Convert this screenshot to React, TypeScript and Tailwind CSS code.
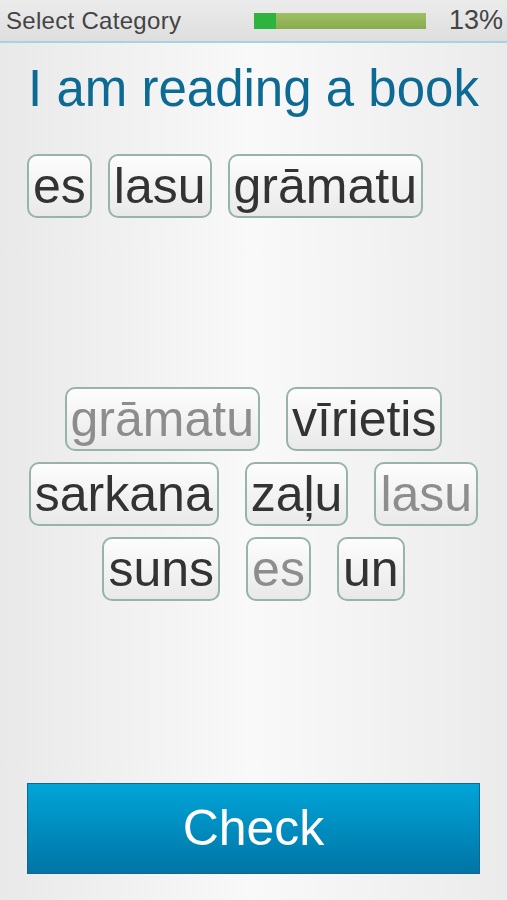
const answer = ['es', 'lasu', 'grāmatu']

const bank: { word: string; used?: boolean }[][] = [
  [{ word: 'grāmatu', used: true }, { word: 'vīrietis' }],
  [{ word: 'sarkana' }, { word: 'zaļu' }, { word: 'lasu', used: true }],
  [{ word: 'suns' }, { word: 'es', used: true }, { word: 'un' }],
]

function Chip({ word, used }: { word: string; used?: boolean }) {
  return (
    <div
      className={`h-[64px] px-[4px] border-2 border-[#98b3ab] rounded-[10px] bg-gradient-to-b from-[#fdfdfd] to-[#e9e9e9] text-[50px] leading-[60px] ${
        used ? 'text-[#8d8d8d]' : 'text-[#333333]'
      }`}
    >
      {word}
    </div>
  )
}

export default function App() {
  return (
    <div className="w-[507px] h-[900px] flex flex-col bg-gradient-to-r from-[#e9e9e9] via-[#f9f9f9] to-[#ebebeb] overflow-hidden font-['Liberation_Sans',Arial,sans-serif]">
      {/* header */}
      <div className="h-[43px] shrink-0 flex items-center pl-[6px] pr-[4px] bg-gradient-to-b from-[#ececec] to-[#dedede] border-b-2 border-[#a9d1e3]">
        <span className="w-[248px] text-[24px] tracking-[0.3px] text-[#444444] leading-none">Select Category</span>
        <div className="w-[172px] h-[16px] flex bg-gradient-to-b from-[#9fc063] to-[#88ab4d]">
          <div className="w-[22px] h-full bg-[#2eb33e]" />
        </div>
        <span className="ml-auto text-[27px] text-[#444444] leading-none">13%</span>
      </div>

      <h1 className="mt-[17px] text-center text-[51px] leading-[57px] text-[#0d6a93]">I am reading a book</h1>

      {/* answer line */}
      <div className="mt-[37px] px-[27px] flex gap-[16px]">
        {answer.map((w) => (
          <Chip key={w} word={w} />
        ))}
      </div>

      {/* word bank */}
      <div className="mt-[169px] flex flex-col gap-[11px]">
        {bank.map((row, i) => (
          <div key={i} className="flex justify-center gap-[26px]">
            {row.map((c) => (
              <Chip key={c.word} word={c.word} used={c.used} />
            ))}
          </div>
        ))}
      </div>

      <div className="mt-auto mb-[26px] mx-[27px] h-[91px] flex items-center justify-center border border-[#16658c] bg-gradient-to-b from-[#00a5d8] to-[#0075a6] text-white text-[50px]">
        Check
      </div>
    </div>
  )
}
